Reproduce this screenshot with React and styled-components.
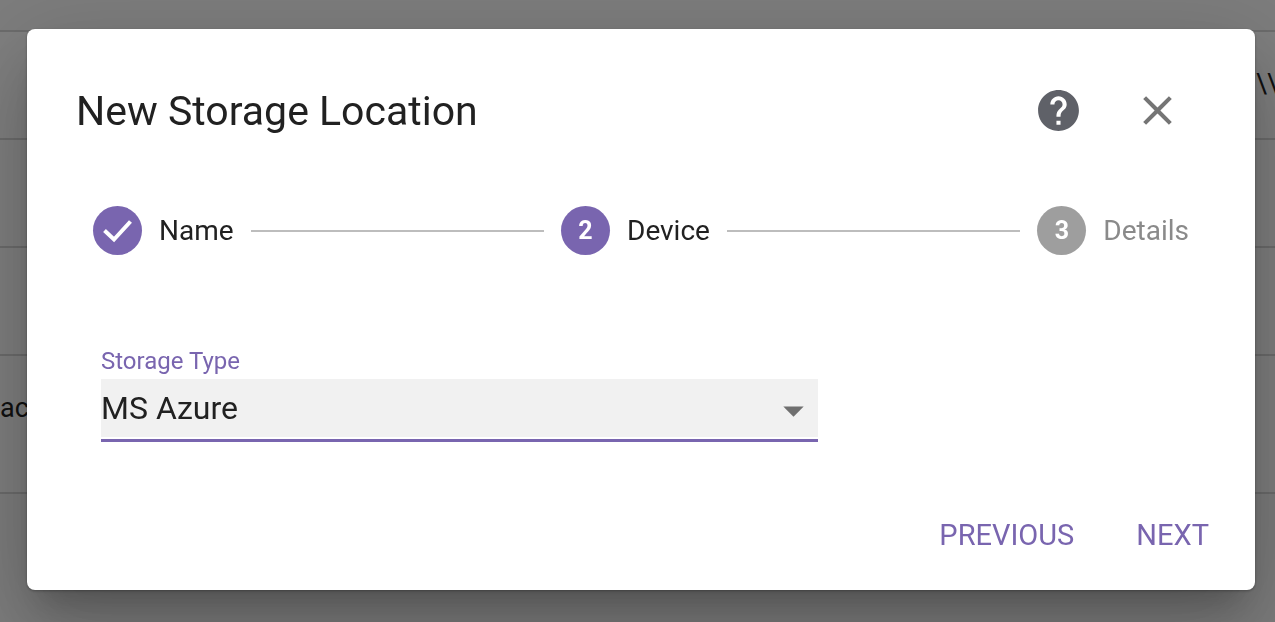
import React, { useState } from "react"
import styled, { createGlobalStyle } from "styled-components"
import { MdClose, MdHelp } from "react-icons/md"

const purple = "#7965af"

const GlobalStyle = createGlobalStyle`
  * {
    box-sizing: border-box;
  }
  body {
    margin: 0;
    background: #fafafa;
    font-family: Roboto, "Liberation Sans", sans-serif;
    color: #212121;
    overflow: hidden;
  }
`;

const Locations = styled.table`
  width: 100%;
  margin-top: 30px;
  table-layout: fixed;
  border-collapse: collapse;
  background: #fff;
  border-top: 2px solid #d8d8d8;
`;

const Row = styled.tr`
  height: ${props => props.$tall ? "138px" : "108px"};
  border-bottom: 2px solid #d8d8d8;
`;

const Cell = styled.td`
  width: ${props => props.$narrow ? "19px" : "auto"};
  padding: 35px 0;
  vertical-align: top;
  overflow: hidden;
  white-space: nowrap;
  font-size: 27px;
  line-height: 34px;
`;

const Backdrop = styled.div`
  position: fixed;
  inset: 0;
  padding: 29px 20px 32px 27px;
  background: rgba(0, 0, 0, 0.5);
`;

const Dialog = styled.section`
  padding: 57px 0 26px;
  border-radius: 8px;
  background: #fff;
  box-shadow:
    0 1px 3px rgba(0, 0, 0, 0.3),
    0 22px 30px -14px rgba(0, 0, 0, 0.2),
    0 48px 76px 6px rgba(0, 0, 0, 0.14),
    0 18px 92px 16px rgba(0, 0, 0, 0.12);
`;

const Header = styled.header`
  display: flex;
  align-items: center;
  gap: 50px;
  padding: 0 73px 0 49px;
`;

const Title = styled.h2`
  flex: 1;
  margin: 0;
  font-size: 41px;
  line-height: 48px;
  font-weight: 400;
`;

const IconButton = styled.button`
  display: flex;
  padding: 0;
  border: 0;
  background: none;
  color: ${props => props.$color};
  cursor: pointer;
`;

const Stepper = styled.ol`
  display: flex;
  align-items: center;
  gap: 17px;
  margin: 0;
  padding: 71px 66px 0;
  list-style: none;
`;

const Step = styled.li`
  display: flex;
  align-items: center;
  gap: 17px;
  font-size: 28px;
  line-height: 32px;
  color: ${props => props.$disabled ? "#8a8a8a" : "#212121"};
`;

const StepIcon = styled.span`
  display: flex;
  align-items: center;
  justify-content: center;
  width: 49px;
  height: 49px;
  border-radius: 50%;
  background: ${props => props.$disabled ? "#9e9e9e" : purple};
  color: #fff;
  font-size: 25px;
  font-weight: 700;
`;

const CheckMark = styled.svg`
  width: 49px;
  height: 49px;
  fill: none;
  stroke: #fff;
  stroke-width: 4;
`;

const Connector = styled.li`
  flex: 1;
  border-top: 2px solid #bdbdbd;
`;

const Field = styled.div`
  padding: 92px 74px 0;
`;

const Label = styled.label`
  display: block;
  font-size: 24px;
  line-height: 28px;
  color: ${purple};
`;

const SelectBox = styled.div`
  position: relative;
  width: 717px;
  max-width: 100%;
  margin-top: 4px;
  padding-bottom: 2px;
  border-bottom: 3px solid ${purple};
`;

const Select = styled.select`
  display: block;
  width: 100%;
  height: 58px;
  padding: 0 48px 0 0;
  border: 0;
  border-radius: 0;
  outline: none;
  appearance: none;
  background: #f1f1f1;
  color: #212121;
  font-family: inherit;
  font-size: 32px;
`;

const Arrow = styled.svg`
  position: absolute;
  top: 7px;
  right: 0;
  width: 49px;
  height: 49px;
  fill: #6f6f6f;
  pointer-events: none;
`;

const Actions = styled.footer`
  display: flex;
  justify-content: flex-end;
  gap: 30px;
  padding: 64px 30px 0;
`;

const ActionButton = styled.button`
  padding: 12px 16px;
  border: 0;
  background: none;
  color: ${purple};
  font-family: inherit;
  font-size: 29px;
  line-height: 34px;
  text-transform: uppercase;
  cursor: pointer;
`;

const steps = ["Name", "Device", "Details"]

//rows of the locations list that sits behind the dialog
const rows = [
  {name: "", path: "\\\\V"},
  {name: "", path: ""},
  {name: "", path: ""},
  {name: "ac", path: "", tall: true},
]

const App = () => {
  const [active, setActive] = useState(1)
  const [type, setType] = useState("MS Azure")

  return (
    <>
      <GlobalStyle />
      <Locations>
        <tbody>
          {rows.map((row, i) => (
            <Row key={i} $tall={row.tall}>
              <Cell>{row.name}</Cell>
              <Cell $narrow>{row.path}</Cell>
            </Row>
          ))}
        </tbody>
      </Locations>
      <Backdrop>
        <Dialog role="dialog" aria-labelledby="dialog-title">
          <Header>
            <Title id="dialog-title">New Storage Location</Title>
            <IconButton $color="#5f6168" aria-label="Help"><MdHelp size={49} /></IconButton>
            <IconButton $color="#757575" aria-label="Close"><MdClose size={49} /></IconButton>
          </Header>
          <Stepper>
            {steps.map((label, i) => (
              <React.Fragment key={label}>
                {i > 0 && <Connector aria-hidden="true" />}
                <Step $disabled={i > active}>
                  <StepIcon $disabled={i > active}>
                    {i < active
                      ? <CheckMark viewBox="0 0 49 49"><path d="M11.5 24.5l9.5 9L37.500 15.500" /></CheckMark>
                      : i + 1}
                  </StepIcon>
                  {label}
                </Step>
              </React.Fragment>
            ))}
          </Stepper>
          <Field>
            <Label htmlFor="storage-type">Storage Type</Label>
            <SelectBox>
              <Select id="storage-type" value={type} onChange={e => setType(e.target.value)}>
                <option>MS Azure</option>
              </Select>
              <Arrow viewBox="0 0 24 24" aria-hidden="true"><path d="M7 10l5 5 5-5z" /></Arrow>
            </SelectBox>
          </Field>
          <Actions>
            <ActionButton onClick={() => setActive(Math.max(active - 1, 0))}>Previous</ActionButton>
            <ActionButton onClick={() => setActive(Math.min(active + 1, 2))}>Next</ActionButton>
          </Actions>
        </Dialog>
      </Backdrop>
    </>
  )
}

export default App
